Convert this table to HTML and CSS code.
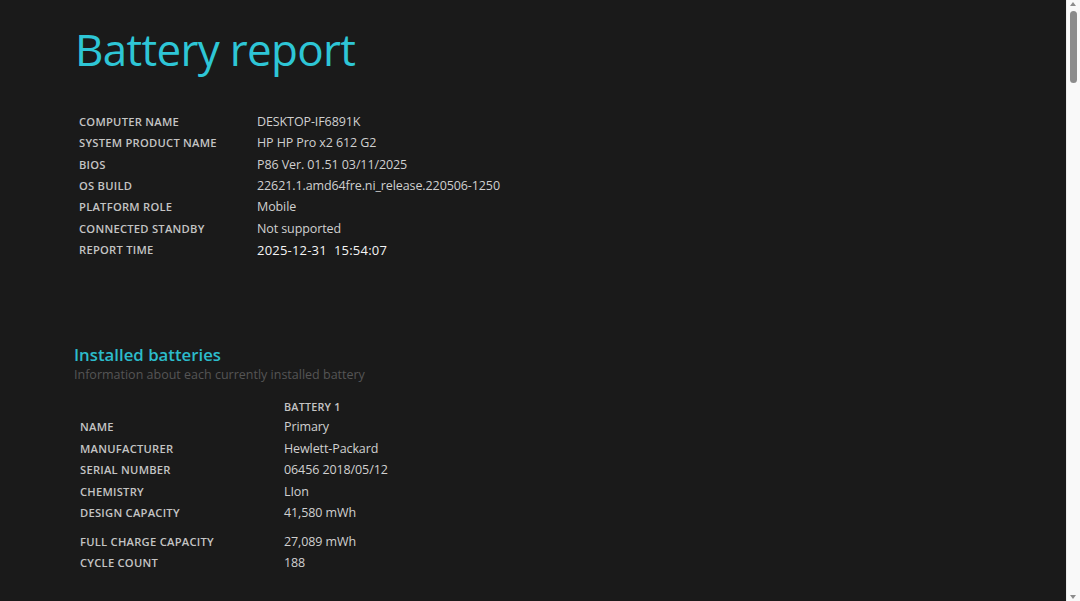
FILE: index.html
```html
<!DOCTYPE html>
<html lang="en">
<head>
<meta charset="utf-8">
<title>Battery report</title>
<link rel="stylesheet" href="styles.css">
</head>
<body>
<div class="page">
  <h1 class="title">Battery report</h1>

  <table class="info">
    <tr><td class="label">COMPUTER NAME</td><td class="value">DESKTOP-IF6891K</td></tr>
    <tr><td class="label">SYSTEM PRODUCT NAME</td><td class="value">HP HP Pro x2 612 G2</td></tr>
    <tr><td class="label">BIOS</td><td class="value">P86 Ver. 01.51 03/11/2025</td></tr>
    <tr><td class="label">OS BUILD</td><td class="value">22621.1.amd64fre.ni_release.220506-1250</td></tr>
    <tr><td class="label">PLATFORM ROLE</td><td class="value">Mobile</td></tr>
    <tr><td class="label">CONNECTED STANDBY</td><td class="value">Not supported</td></tr>
    <tr><td class="label">REPORT TIME</td><td class="value strong">2025-12-31&nbsp;&nbsp;15:54:07</td></tr>
  </table>

  <section class="section">
    <h2 class="section-title">Installed batteries</h2>
    <p class="section-desc">Information about each currently installed battery</p>

    <table class="batteries">
      <tr class="head-row"><td class="label"></td><td class="colhead">BATTERY 1</td></tr>
      <tr><td class="label">NAME</td><td class="value">Primary</td></tr>
      <tr><td class="label">MANUFACTURER</td><td class="value">Hewlett-Packard</td></tr>
      <tr><td class="label">SERIAL NUMBER</td><td class="value">06456 2018/05/12</td></tr>
      <tr><td class="label">CHEMISTRY</td><td class="value">LIon</td></tr>
      <tr class="group-end"><td class="label">DESIGN CAPACITY</td><td class="value">41,580 mWh</td></tr>
      <tr><td class="label">FULL CHARGE CAPACITY</td><td class="value">27,089 mWh</td></tr>
      <tr><td class="label">CYCLE COUNT</td><td class="value">188</td></tr>
    </table>
  </section>
</div>

<div class="scrollbar" aria-hidden="true">
  <span class="arrow up"></span>
  <span class="thumb"></span>
  <span class="arrow down"></span>
</div>
</body>
</html>
```
FILE: styles.css
```css
html, body {
  margin: 0;
  padding: 0;
  background: #1a1a1a;
}
body {
  font-family: "Open Sans", "Noto Sans", sans-serif;
  color: #d2d2d2;
}
.page {
  padding: 19px 0 0 75px;
  min-height: 4700px;
}
.title {
  margin: 0;
  font-size: 44px;
  font-weight: 400;
  line-height: 60px;
  color: #2ec6d6;
  letter-spacing: -0.7px;
}
.info {
  margin-top: 32px;
  border-collapse: collapse;
}
.info td {
  padding: 0;
  height: 21.33px;
  vertical-align: middle;
}
.label {
  font-size: 11.2px;
  font-weight: 600;
  color: #c4c4c4;
  letter-spacing: 0.25px;
}
.info .label {
  width: 178px;
  padding-left: 4px;
}
.value {
  font-size: 12.5px;
  color: #d0d0d0;
  letter-spacing: -0.1px;
}
.value.strong {
  color: #f4f4f4;
  font-size: 13px;
  font-weight: 500;
  letter-spacing: 0.2px;
}
.section {
  margin-top: 83px;
}
.section-title {
  margin: 0 0 0 -1px;
  font-size: 16.8px;
  font-weight: 600;
  color: #2cbccb;
  line-height: 23px;
}
.section-desc {
  margin: 0 0 0 -1px;
  font-size: 12.5px;
  color: #555555;
  line-height: 18px;
}
.batteries {
  margin-top: 12px;
  border-collapse: collapse;
}
.batteries td {
  padding: 0;
  height: 21.5px;
}
.batteries .head-row td {
  height: 19.5px;
}
.batteries .label {
  width: 204px;
  padding-left: 5px;
}
.colhead {
  font-size: 10.8px;
  font-weight: 600;
  color: #c4c4c4;
  letter-spacing: 0.2px;
}
.group-end td {
  padding-bottom: 7px;
}

/* simulated browser scrollbar (overlay on the right edge) */
.scrollbar {
  position: fixed;
  top: 0;
  right: 0;
  width: 13px;
  height: 100%;
  background: #f9f9f9;
  border-left: 1px solid #ededed;
}
.thumb {
  position: absolute;
  top: 11px;
  left: 3px;
  width: 7px;
  height: 72px;
  border-radius: 4px;
  background: #8c8c8c;
}
.arrow {
  position: absolute;
  left: 3px;
  width: 0;
  height: 0;
  border-left: 3.5px solid transparent;
  border-right: 3.5px solid transparent;
}
.arrow.up {
  top: 2px;
  border-bottom: 4px solid #8c8c8c;
}
.arrow.down {
  bottom: 2px;
  border-top: 4px solid #8c8c8c;
}
```
